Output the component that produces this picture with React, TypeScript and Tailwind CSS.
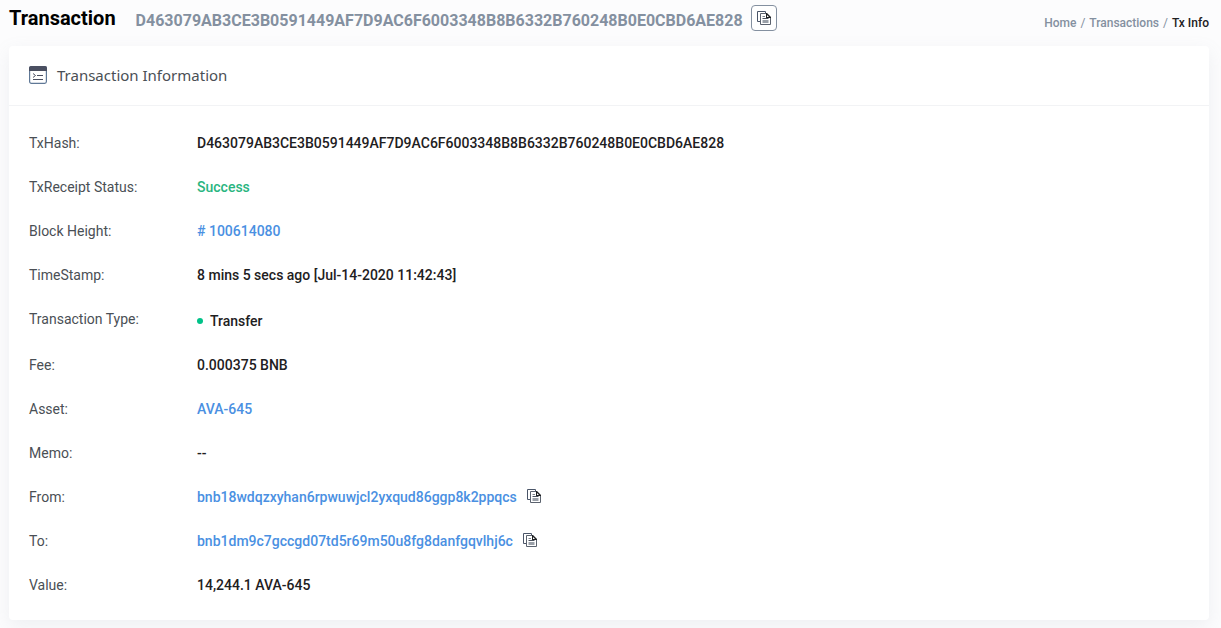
import type { ReactNode } from 'react'

const TX_HASH = 'D463079AB3CE3B0591449AF7D9AC6F6003348B8B6332B760248B0E0CBD6AE828'

function CopyIcon() {
  return (
    <svg width="14" height="14" viewBox="0 0 14 14" fill="none" aria-hidden="true">
      <path d="M3 10.5H.5V.5h8v2" stroke="#4a5568" />
      <path d="M3.5 2.5h6l4 4v7h-10z" fill="#fff" stroke="#5b626e" />
      <path d="M9 2h1l4 4v1H9z" fill="#1e2022" />
      <path d="M10 4v2h2z" fill="#fff" />
      <path d="M5.5 5.5H8" stroke="#7d838c" />
      <path d="M5.5 7.5h6" stroke="#4b525e" />
      <path d="M5.5 9h6v3h-6z" fill="#9aa0a8" />
    </svg>
  )
}

function TxIcon() {
  return (
    <svg width="18" height="18" viewBox="0 0 18 18" fill="none" aria-hidden="true">
      <rect x="0.6" y="0.6" width="16.8" height="16.8" rx="1.8" fill="#fff" stroke="#5f7896" strokeWidth="1.2" />
      <path d="M0 2a2 2 0 0 1 2-2h14a2 2 0 0 1 2 2v3H0z" fill="#4a4f61" />
      <path d="M4 7.5l2.5 2-2.5 2M8 9.5h6M4 13.5h10" stroke="#4a4f61" />
    </svg>
  )
}

function CopyButton({ label }: { label: string }) {
  return (
    <button type="button" title={label} aria-label={label} className="ml-2.5 cursor-pointer pb-0.5">
      <CopyIcon />
    </button>
  )
}

function BlueLink({ children }: { children: ReactNode }) {
  return (
    <a href="#" className="text-[#4a90e2] hover:underline">
      {children}
    </a>
  )
}

const rows: { label: string; value: ReactNode }[] = [
  { label: 'TxHash:', value: TX_HASH },
  { label: 'TxReceipt Status:', value: <span className="text-[#29b57f]">Success</span> },
  { label: 'Block Height:', value: <BlueLink># 100614080</BlueLink> },
  { label: 'TimeStamp:', value: '8 mins 5 secs ago [Jul-14-2020 11:42:43]' },
  {
    label: 'Transaction Type:',
    value: (
      <span className="flex items-center gap-[7px] pt-0.5">
        <span className="size-1.5 rounded-full bg-[#00c288]" />
        Transfer
      </span>
    ),
  },
  { label: 'Fee:', value: '0.000375 BNB' },
  { label: 'Asset:', value: <BlueLink>AVA-645</BlueLink> },
  { label: 'Memo:', value: '--' },
  {
    label: 'From:',
    value: (
      <span className="flex items-center">
        <BlueLink>bnb18wdqzxyhan6rpwuwjcl2yxqud86ggp8k2ppqcs</BlueLink>
        <CopyButton label="Copy sender address" />
      </span>
    ),
  },
  {
    label: 'To:',
    value: (
      <span className="flex items-center">
        <BlueLink>bnb1dm9c7gccgd07td5r69m50u8fg8danfgqvlhj6c</BlueLink>
        <CopyButton label="Copy recipient address" />
      </span>
    ),
  },
  { label: 'Value:', value: '14,244.1 AVA-645' },
]

export default function App() {
  return (
    <div className="min-h-screen bg-[#fcfcfd] px-3 pb-2 pl-[9px] font-['Roboto',sans-serif] text-[#1e2022]">
      <header className="flex items-start justify-between pb-[9px]">
        <div className="flex items-start pt-[5px]">
          <h1 className="text-xl leading-[27px] font-bold text-black">Transaction</h1>
          <span className="ml-5 text-base leading-8 font-bold text-[#8490a0]">{TX_HASH}</span>
          <button
            type="button"
            title="Copy transaction hash"
            aria-label="Copy transaction hash"
            className="ml-2 flex size-[26px] cursor-pointer items-center justify-center rounded-sm border border-[#8490a0] bg-white"
          >
            <CopyIcon />
          </button>
        </div>
        <nav aria-label="Breadcrumb" className="pt-3.5">
          <ol className="flex gap-1 text-xs leading-[18px] font-medium text-[#8490a0]">
            <li>
              <a href="#">Home</a>
            </li>
            <li aria-hidden="true" className="font-normal">/</li>
            <li>
              <a href="#">Transactions</a>
            </li>
            <li aria-hidden="true" className="font-normal">/</li>
            <li className="text-[#1e2022]">Tx Info</li>
          </ol>
        </nav>
      </header>

      <main className="rounded-sm bg-white shadow-[0_6px_18px_rgba(140,152,164,0.125)]">
        <div className="flex items-center gap-2.5 border-b border-[#f2f3f5] px-5 pt-[17px] pb-[18px]">
          <TxIcon />
          <h2 className="font-['Noto_Sans',sans-serif] text-[15px] leading-6 text-[#4a4f55]">
            Transaction Information
          </h2>
        </div>
        <dl className="flex flex-col gap-5 px-5 pt-[25px] pb-[23px] text-sm leading-6">
          {rows.map(({ label, value }) => (
            <div key={label} className="flex">
              <dt className="w-[168px] shrink-0 text-[#4a4f55]">{label}</dt>
              <dd className="min-w-0 flex-1 font-medium">{value}</dd>
            </div>
          ))}
        </dl>
      </main>
    </div>
  )
}
